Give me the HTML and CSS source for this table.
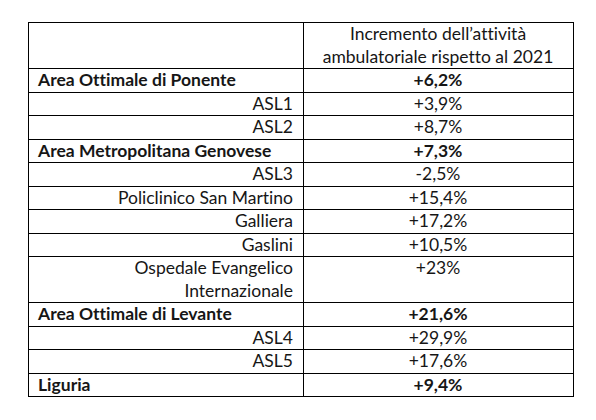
FILE: index.html
```html
<!DOCTYPE html>
<html lang="it">
<head>
<meta charset="utf-8">
<title>Incremento attività ambulatoriale</title>
<link rel="stylesheet" href="styles.css">
</head>
<body>
<div class="wrap">
<table class="data">
  <tr class="head">
    <th class="name"></th>
    <th class="val">Incremento dell’attività<br>ambulatoriale rispetto al 2021</th>
  </tr>
  <tr class="area"><td class="name">Area Ottimale di Ponente</td><td class="val">+6,2%</td></tr>
  <tr class="sub"><td class="name">ASL1</td><td class="val">+3,9%</td></tr>
  <tr class="sub"><td class="name">ASL2</td><td class="val">+8,7%</td></tr>
  <tr class="area"><td class="name">Area Metropolitana Genovese</td><td class="val">+7,3%</td></tr>
  <tr class="sub"><td class="name">ASL3</td><td class="val">-2,5%</td></tr>
  <tr class="sub"><td class="name">Policlinico San Martino</td><td class="val">+15,4%</td></tr>
  <tr class="sub"><td class="name">Galliera</td><td class="val">+17,2%</td></tr>
  <tr class="sub"><td class="name">Gaslini</td><td class="val">+10,5%</td></tr>
  <tr class="sub"><td class="name">Ospedale Evangelico<br>Internazionale</td><td class="val">+23%</td></tr>
  <tr class="area"><td class="name">Area Ottimale di Levante</td><td class="val">+21,6%</td></tr>
  <tr class="sub"><td class="name">ASL4</td><td class="val">+29,9%</td></tr>
  <tr class="sub"><td class="name">ASL5</td><td class="val">+17,6%</td></tr>
  <tr class="area"><td class="name">Liguria</td><td class="val">+9,4%</td></tr>
</table>
</div>
</body>
</html>
```

FILE: styles.css
```css
html, body {
  margin: 0;
  padding: 0;
  background: #ffffff;
}
.wrap {
  padding: 22px 0 0 28px;
}
.data {
  border-collapse: collapse;
  width: 546px;
  table-layout: fixed;
  font-family: "Lato", "Open Sans", sans-serif;
  font-size: 17.5px;
  line-height: 22.5px;
  color: #161616;
  font-variant-ligatures: none;
}
.data th,
.data td {
  border: 1px solid #000;
  padding: 0 10px 0 9px;
  vertical-align: top;
  font-weight: normal;
}
.data .name {
  width: 255px;
}
.data .val {
  text-align: center;
}
.data .sub .name {
  text-align: right;
}
.data .area td {
  font-weight: bold;
}
```
